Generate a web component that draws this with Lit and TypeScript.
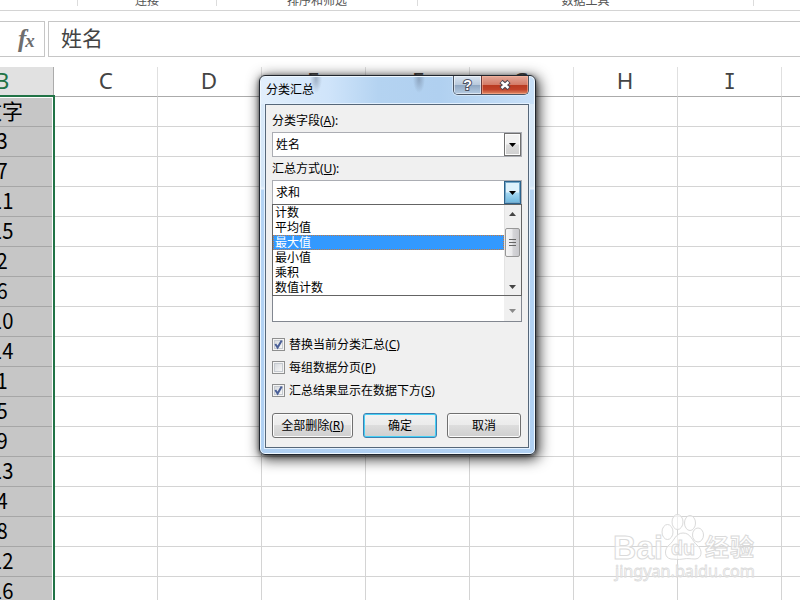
import { LitElement, html, css, svg } from "lit";
import { customElement, property } from "lit/decorators.js";

const shared = css`
  * { box-sizing: border-box; }
`;

@customElement("sheet-grid")
class SheetGrid extends LitElement {
  static styles = [shared, css`
    :host { display: flex; height: 533px; font: 22px/30px "Noto Sans", "Noto Sans CJK SC", sans-serif; }
    .col { flex: none; width: 104px; }
    .head { height: 30px; border-bottom: 1px solid #ababab; border-right: 1px solid #e0e0e0; text-align: center; color: #444; line-height: 27px; font-size: 22px; }
    .cell { height: 30px; border-bottom: 1px solid #d4d4d4; border-right: 1px solid #d4d4d4; }
    .sel { width: 55px; display: flex; flex-direction: column; overflow: hidden; }
    .sel .head { flex: none; height: 28px; background: #e1e1e1; color: #217346; border: 0; border-right: 1px solid #ababab; width: 54px; }
    .sel .body { flex: 1; border-top: 2px solid #217346; border-right: 2px solid #217346; padding: 1px 1px 0 0; }
    .sel .cell { background: #c6c6c6; border-bottom-color: #a6a6a6; border-right: 0; color: #000; text-align: center; line-height: 25px; }
    .sel .cell:first-child { height: 29px; line-height: 25px; }
    .in { display: flex; justify-content: center; width: 104px; margin-left: -50px; }
    .num { font-family: "Noto Sans CJK SC", sans-serif; transform: scaleX(.92); }
    .cjk { font-size: 21px; transform: none; }
    .l { display: inline-block; transform: scaleX(1.02); }
    .serif { font-family: "DejaVu Sans Mono", monospace; transform: scaleX(.9); }
  `];
  render() {
    const values = ["数字", "3", "7", "11", "15", "2", "6", "10", "14", "1", "5", "9", "13", "4", "8", "12", "16"];
    return html`
      <div class="sel col">
        <div class="head"><div class="in"><span class="l">B</span></div></div>
        <div class="body">
          ${values.map((v, i) => html`<div class="cell"><div class="in"><span class="num ${i ? "" : "cjk"}">${v}</span></div></div>`)}
        </div>
      </div>
      ${"CDEFGHIJ".split("").map((c, i) => html`<div class="col" style="width:${i ? 104 : 103}px">
        <div class="head"><span class="l ${c === "I" ? "serif" : ""}">${c}</span></div>
        ${values.map(() => html`<div class="cell"></div>`)}
      </div>`)}`;
  }
}

@customElement("combo-box")
class ComboBox extends LitElement {
  @property() value = "";
  @property({ type: Boolean, reflect: true }) open = false;
  static styles = [shared, css`
    :host { display: flex; height: 25px; border: 1px solid #abadb3; background: #fff; }
    .value { flex: 1; padding-left: 3px; line-height: 23px; }
    .arrow { width: 17px; border: 1px solid #707070; box-shadow: inset 0 0 0 1px #fcfcfc; background: linear-gradient(#f2f2f2 0 48%, #dcdcdc 52%, #cfcfcf); display: flex; align-items: center; justify-content: center; }
    :host([open]) .arrow { border-color: #2c628b; box-shadow: inset 0 0 0 1px #76a9ca; background: linear-gradient(#dff2fc 0 48%, #a5d8f2 52%, #6db6dd); }
  `];
  render() {
    return html`<span class="value">${this.value}</span>
      <span class="arrow"><svg width="7" height="4"><path d="M0 0H7L3.5 4Z" fill="#000"/></svg></span>`;
  }
}

@customElement("check-line")
class CheckLine extends LitElement {
  @property() label = "";
  @property() key = "";
  @property({ type: Boolean }) checked = false;
  static styles = [shared, css`
    :host { display: flex; height: 23px; align-items: center; }
    .box { width: 13px; height: 13px; border: 1px solid #8e8f8f; background: linear-gradient(135deg, #cfd3d8, #f6f6f6 80%); box-shadow: inset 0 0 0 1px #f4f4f4, inset 0 0 0 2px #c5cad0; margin-right: 4px; }
    svg { display: block; }
    u { text-underline-offset: 1px; }
  `];
  render() {
    return html`<span class="box">${this.checked ? html`<svg width="11" height="11"><path d="M2.3 5L4.6 8.5L8.7 1.5" fill="none" stroke="#4a5f97" stroke-width="2"/></svg>` : ""}</span>
      <span>${this.label}(<u>${this.key}</u>)</span>`;
  }
}

@customElement("subtotal-dialog")
class SubtotalDialog extends LitElement {
  static styles = [shared, css`
    :host { display: flex; flex-direction: column; border: 1px solid #20262e; border-radius: 6px; overflow: hidden;
      font: 12px/16px "Noto Sans", "Noto Sans CJK SC", sans-serif; color: #000; padding: 0 6px 6px 5px;
      background: linear-gradient(#dcebf9 0, #d3e5f6 110px, #e8f2fb 113px, #b5d4f4 114px, #b0d0f2 100%);
      box-shadow: inset 0 0 0 1px #eff8ff; }
    :host::before { content: ""; position: absolute; inset: 1px 1px auto 1px; height: 27px; border-radius: 5px 5px 0 0;
      background: radial-gradient(ellipse 6px 14px at 55px 2px, #65748a77, #65748a00), radial-gradient(ellipse 6px 14px at 158px 2px, #65748a77, #65748a00),
       linear-gradient(90deg, #e2effc 0, #cfe4fa 25%, #b4d3f1 43%, #b0d0f0 65%, #c8e0f8 100%); }
    .title { position: relative; height: 28px; display: flex; justify-content: space-between; flex: none; }
    .title b { font-weight: 400; padding: 6px 0 0 1px; line-height: 16px; }
    .caps { display: flex; height: 19px; border: 1px solid #4c5563; border-top: 0; border-radius: 0 0 5px 5px; overflow: hidden; width: 76px; box-shadow: 0 0 0 1px #e5f1fd99; }
    .help, .close { display: flex; align-items: center; justify-content: center; }
    .help { width: 28px; border-right: 1px solid #6a3a3a; box-shadow: inset 0 0 0 1px #ffffff88; background: linear-gradient(#d9e5f2, #b9c9dc 48%, #8fa6c1 50%, #b6cce3); }
    .close { flex: 1; box-shadow: inset 0 0 0 1px #ffbba088; background: linear-gradient(#e3a899, #d47c68 48%, #b83a20 50%, #c1432a 75%, #e08a66); }
    .q { font: bold 14px/18px "Liberation Sans", sans-serif; color: #fff; -webkit-text-stroke: 2px #4b5162; paint-order: stroke fill; }
    .client { position: relative; flex: 1; border: 1px solid #566779; background: #f0f0f0; padding: 8px 6px 0; box-shadow: 0 0 0 1px #e3f1ff; }
    .label { height: 16px; margin-bottom: 3px; }
    .second { margin-top: 4px; }
    .second + combo-box { margin-top: 3px; }
    .drop { height: 92px; margin-top: -1px; border: 1px solid #646464; background: #fff; display: flex; position: relative; }
    .items { flex: 1; line-height: 15px; }
    .item { height: 15px; padding-left: 2px; }
    .on { background: #3399ff; color: #fff; outline: 1px dotted #c47a40; outline-offset: -1px; }
    .scroll { width: 17px; background: #efefef; border-left: 1px solid #e3e3e3; display: flex; flex-direction: column; align-items: center; padding: 7px 1px 6px 0; }
    .thumb { width: 15px; height: 29px; margin-top: 12px; margin-bottom: auto; border: 1px solid #979797; border-radius: 2px; background: linear-gradient(90deg, #f5f5f5, #e9e9eb 48%, #d5d5d8 52%, #c8c8cc); display: flex; align-items: center; justify-content: center; }
    .rest { height: 26px; border: 1px solid #828790; border-top: 0; background: #fff; display: flex; justify-content: flex-end; }
    .rest span { width: 17px; background: #f0f0f0; display: flex; justify-content: center; padding-top: 13px; }
    .checks { margin-top: 11px; }
    .buttons { display: flex; gap: 10px; margin-top: 11px; }
    .btn { width: 74px; height: 25px; border: 1px solid #707070; border-radius: 3px; box-shadow: inset 0 0 0 1px #fcfcfc; background: linear-gradient(#f2f2f2, #ebebeb 48%, #dddddd 50%, #cfcfcf); text-align: center; line-height: 23px; }
    .wide { width: 81px; }
    .def { border-color: #3c7fb1; box-shadow: inset 0 0 0 1px #46d0f5; }
    u { text-underline-offset: 1px; }
  `];
  render() {
    return html`
      <div class="title"><b>分类汇总</b>
        <div class="caps"><span class="help"><span class="q">?</span></span>
          <span class="close"><svg width="14" height="12"><path d="M3 2.5L11 9.5M11 2.5L3 9.5" stroke="#4b4652" stroke-width="4.8"/><path d="M3.5 3L10.5 9M10.5 3L3.5 9" stroke="#fff" stroke-width="2.5"/></svg></span></div>
      </div>
      <div class="client">
        <div class="label">分类字段(<u>A</u>):</div>
        <combo-box value="姓名"></combo-box>
        <div class="label second">汇总方式(<u>U</u>):</div>
        <combo-box value="求和" open></combo-box>
        <div class="drop">
          <div class="items">${["计数", "平均值", "最大值", "最小值", "乘积", "数值计数"].map((t) => html`<div class="item ${t === "最大值" ? "on" : ""}">${t}</div>`)}</div>
          <div class="scroll">
            <svg width="7" height="4"><path d="M0 4H7L3.5 0Z" fill="#444"/></svg>
            <span class="thumb"><svg width="7" height="9"><path d="M0 1.5H7M0 4.5H7M0 7.5H7" stroke="#666"/></svg></span>
            <svg width="7" height="4"><path d="M0 0H7L3.5 4Z" fill="#444"/></svg>
          </div>
        </div>
        <div class="rest"><span><svg width="7" height="4"><path d="M0 0H7L3.5 4Z" fill="#8a8a8a"/></svg></span></div>
        <div class="checks">
          <check-line label="替换当前分类汇总" key="C" checked></check-line>
          <check-line label="每组数据分页" key="P"></check-line>
          <check-line label="汇总结果显示在数据下方" key="S" checked></check-line>
        </div>
        <div class="buttons">
          <div class="btn wide">全部删除(<u>R</u>)</div><div class="btn def">确定</div><div class="btn">取消</div>
        </div>
      </div>`;
  }
}

@customElement("app-root")
class AppRoot extends LitElement {
  static styles = [shared, css`
    :host { display: block; position: relative; width: 800px; height: 600px; overflow: hidden; background: #fff; font-family: "Noto Sans", "Noto Sans CJK SC", sans-serif; }
    .ribbon { height: 11px; border-bottom: 1px solid #d4d4d4; display: flex; overflow: hidden; font-size: 12px; line-height: 16px; color: #555; }
    .group { flex: none; height: 6px; border-right: 1px solid #dcdcdc; text-align: center; }
    .group span { display: block; margin-top: -7px; }
    .formula { height: 36px; margin-top: 10px; display: flex; gap: 3px; }
    .fx { width: 45px; border: 1px solid #c6c6c6; border-left: 0; display: flex; align-items: center; padding-left: 18px; font: italic bold 25px/30px "Liberation Serif", serif; color: #6e6e6e; }
    .fx small { font-size: 19px; margin: 4px 0 0 -1px; line-height: 20px; }
    .bar { flex: 1; border: 1px solid #c6c6c6; border-right: 0; padding-left: 12px; font-size: 21px; line-height: 33px; color: #444; }
    sheet-grid { margin-top: 10px; }
    .shade { position: absolute; left: 259px; top: 75px; width: 277px; height: 380px; border-radius: 6px; box-shadow: 2px 3px 14px 1px #000000cc, 0 1px 4px #00000080; }
    subtotal-dialog { position: absolute; left: 259px; top: 75px; width: 277px; height: 380px; }
    .mark { position: absolute; left: 605px; top: 505px; }
  `];
  render() {
    const groups: [number, string][] = [[78, ""], [139, "连接"], [201, "排序和筛选"], [336, "数据工具"]];
    return html`
      <div class="ribbon">${groups.map(([w, t]) => html`<div class="group" style="width:${w}px"><span>${t}</span></div>`)}</div>
      <div class="formula"><div class="fx">f<small>x</small></div><div class="bar">姓名</div></div>
      <sheet-grid></sheet-grid>
      <svg class="mark" width="170" height="85" fill="#fff" fill-opacity=".6" stroke="#dadada" stroke-width="1">
        ${svg`<g font-family="'Liberation Sans', sans-serif" font-weight="700">
          <text x="8" y="54" font-size="33" textLength="50" lengthAdjust="spacingAndGlyphs">Bai</text>
          <ellipse cx="62.5" cy="27" rx="5.5" ry="7.5"/><ellipse cx="72.5" cy="17" rx="5.5" ry="7.5"/><ellipse cx="85" cy="18" rx="5.5" ry="7.5"/><ellipse cx="93" cy="30" rx="5.5" ry="7"/>
          <path d="M78 28C86 28 87 36 92 40C99 46 96 54 90 54C85 54 83 53 78 54C73 55 70 54 66 54C59 53 59 44 64 40C69 37 70 28 78 28Z"/>
          <text x="66" y="50" font-size="20" textLength="24" lengthAdjust="spacingAndGlyphs">du</text>
          <text x="100" y="51" font-size="24" font-family="'Noto Sans CJK SC', sans-serif" textLength="49">经验</text>
          <text x="10" y="72" font-size="17" font-family="'Noto Sans', sans-serif" font-weight="400" stroke-width=".8" textLength="140" lengthAdjust="spacingAndGlyphs">jingyan.baidu.com</text>
        </g>`}
      </svg>
      <div class="shade"></div>
      <subtotal-dialog></subtotal-dialog>`;
  }
}
